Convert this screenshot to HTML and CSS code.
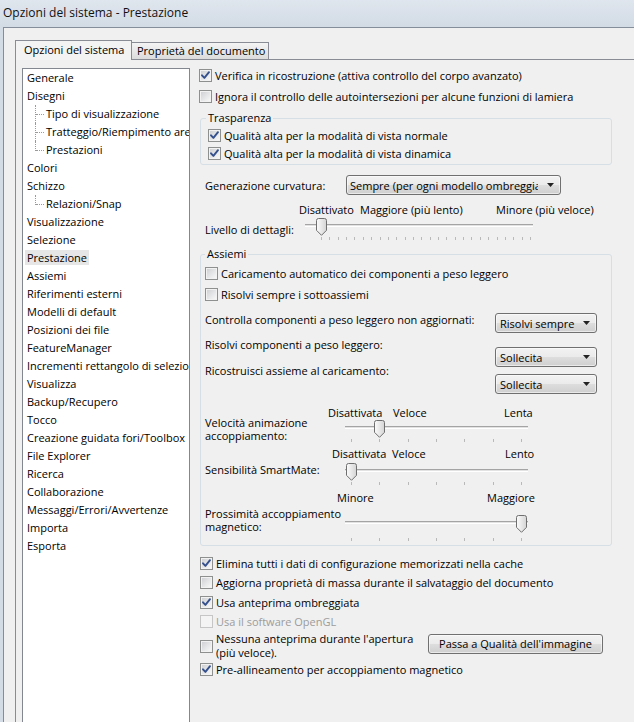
FILE: index.html
```html
<!DOCTYPE html>
<html lang="it">
<head>
<meta charset="utf-8">
<title>Opzioni del sistema - Prestazione</title>
<link rel="stylesheet" href="styles.css">
</head>
<body>
<div class="titlebar">Opzioni del sistema - Prestazione</div>
<div class="client">
  <div class="tabs">
    <div class="tab tab-active">Opzioni del sistema</div>
    <div class="tab tab-inactive">Proprietà del documento</div>
  </div>
  <div class="panel">
    <ul class="tree">
      <li>Generale</li>
      <li>Disegni</li>
      <li class="child">Tipo di visualizzazione</li>
      <li class="child">Tratteggio/Riempimento area</li>
      <li class="child last">Prestazioni</li>
      <li>Colori</li>
      <li>Schizzo</li>
      <li class="child last">Relazioni/Snap</li>
      <li>Visualizzazione</li>
      <li>Selezione</li>
      <li><span class="sel">Prestazione</span></li>
      <li>Assiemi</li>
      <li>Riferimenti esterni</li>
      <li>Modelli di default</li>
      <li>Posizioni dei file</li>
      <li>FeatureManager</li>
      <li>Incrementi rettangolo di selezione</li>
      <li>Visualizza</li>
      <li>Backup/Recupero</li>
      <li>Tocco</li>
      <li>Creazione guidata fori/Toolbox</li>
      <li>File Explorer</li>
      <li>Ricerca</li>
      <li>Collaborazione</li>
      <li>Messaggi/Errori/Avvertenze</li>
      <li>Importa</li>
      <li>Esporta</li>
    </ul>

    <div class="opts">
      <div class="cb-row top"><span class="cb"><svg viewBox="0 0 11 11"><path d="M2 5.3 L4.4 7.9 L9 2.2"/></svg></span>Verifica in ricostruzione (attiva controllo del corpo avanzato)</div>
      <div class="cb-row top"><span class="cb"></span>Ignora il controllo delle autointersezioni per alcune funzioni di lamiera</div>

      <div class="group group-trasp">
        <div class="legend">Trasparenza</div>
        <div class="cb-row sub"><span class="cb"><svg viewBox="0 0 11 11"><path d="M2 5.3 L4.4 7.9 L9 2.2"/></svg></span>Qualità alta per la modalità di vista normale</div>
        <div class="cb-row sub"><span class="cb"><svg viewBox="0 0 11 11"><path d="M2 5.3 L4.4 7.9 L9 2.2"/></svg></span>Qualità alta per la modalità di vista dinamica</div>
      </div>

      <div class="curv-row">
        <span class="curv-label">Generazione curvatura:</span>
        <div class="combo combo-wide"><span class="combo-text">Sempre (per ogni modello ombreggiato)</span><svg class="arrow" viewBox="0 0 7 4"><path d="M0 0 H7 L3.5 4 Z"/></svg></div>
      </div>

      <div class="scale scale-1"><span>Disattivato</span><span>Maggiore (più lento)</span><span>Minore (più veloce)</span></div>
      <div class="slider-row">
        <span class="slider-label label-1">Livello di dettagli:</span>
        <div class="slider slider-1">
          <div class="track"></div>
          <div class="ticks ticks-1"><i></i><i></i><i></i><i></i><i></i><i></i><i></i><i></i><i></i><i></i><i></i><i></i><i></i><i></i><i></i><i></i><i></i><i></i><i></i><i></i><i></i><i></i><i></i><i></i><i></i><i></i></div>
          <svg class="thumb" style="left:11px" viewBox="0 0 11 18"><defs><linearGradient id="thumbFill" x1="0" y1="0" x2="1" y2="0"><stop offset="0" stop-color="#fcfcfc"/><stop offset="1" stop-color="#d4d4d4"/></linearGradient></defs><path d="M0.5 2.5 Q0.5 0.5 2.5 0.5 H8.5 Q10.5 0.5 10.5 2.5 V12.3 L5.5 17.3 L0.5 12.3 Z"/></svg>
        </div>
      </div>

      <div class="group group-assiemi">
        <div class="legend">Assiemi</div>
        <div class="cb-row top first"><span class="cb"></span>Caricamento automatico dei componenti a peso leggero</div>
        <div class="cb-row top"><span class="cb"></span>Risolvi sempre i sottoassiemi</div>

        <div class="pairs">
          <div class="pair-labels">
            <span class="pl-a">Controlla componenti a peso leggero non aggiornati:</span>
            <span class="pl-b">Risolvi componenti a peso leggero:</span>
            <span class="pl-c">Ricostruisci assieme al caricamento:</span>
          </div>
          <div class="pair-combos">
            <div class="combo combo-small pc-a"><span class="combo-text">Risolvi sempre</span><svg class="arrow" viewBox="0 0 7 4"><path d="M0 0 H7 L3.5 4 Z"/></svg></div>
            <div class="combo combo-small pc-b"><span class="combo-text">Sollecita</span><svg class="arrow" viewBox="0 0 7 4"><path d="M0 0 H7 L3.5 4 Z"/></svg></div>
            <div class="combo combo-small pc-c"><span class="combo-text">Sollecita</span><svg class="arrow" viewBox="0 0 7 4"><path d="M0 0 H7 L3.5 4 Z"/></svg></div>
          </div>
        </div>

        <div class="scale scale-2"><span>Disattivata</span><span>Veloce</span><span>Lenta</span></div>
        <div class="slider-row">
          <span class="slider-label label-2">Velocità animazione<br>accoppiamento:</span>
          <div class="slider slider-7">
            <div class="track"></div>
            <div class="ticks ticks-7"><i></i><i></i><i></i><i></i><i></i><i></i><i></i></div>
            <svg class="thumb" style="left:29px" viewBox="0 0 11 18"><path d="M0.5 2.5 Q0.5 0.5 2.5 0.5 H8.5 Q10.5 0.5 10.5 2.5 V12.3 L5.5 17.3 L0.5 12.3 Z"/></svg>
          </div>
        </div>

        <div class="scale scale-3"><span>Disattivata</span><span>Veloce</span><span>Lento</span></div>
        <div class="slider-row row-3">
          <span class="slider-label label-3">Sensibilità SmartMate:</span>
          <div class="slider slider-7">
            <div class="track"></div>
            <div class="ticks ticks-7"><i></i><i></i><i></i><i></i><i></i><i></i><i></i></div>
            <svg class="thumb" style="left:1px" viewBox="0 0 11 18"><path d="M0.5 2.5 Q0.5 0.5 2.5 0.5 H8.5 Q10.5 0.5 10.5 2.5 V12.3 L5.5 17.3 L0.5 12.3 Z"/></svg>
          </div>
        </div>

        <div class="scale scale-4"><span>Minore</span><span>Maggiore</span></div>
        <div class="slider-row row-4">
          <span class="slider-label label-4">Prossimità accoppiamento<br>magnetico:</span>
          <div class="slider slider-7 slider-last">
            <div class="track"></div>
            <div class="ticks ticks-7"><i></i><i></i><i></i><i></i><i></i><i></i><i></i></div>
            <svg class="thumb" style="left:171px" viewBox="0 0 11 18"><path d="M0.5 2.5 Q0.5 0.5 2.5 0.5 H8.5 Q10.5 0.5 10.5 2.5 V12.3 L5.5 17.3 L0.5 12.3 Z"/></svg>
          </div>
        </div>
      </div>

      <div class="bottom">
        <div class="cb-row low"><span class="cb"><svg viewBox="0 0 11 11"><path d="M2 5.3 L4.4 7.9 L9 2.2"/></svg></span>Elimina tutti i dati di configurazione memorizzati nella cache</div>
        <div class="cb-row low"><span class="cb"></span>Aggiorna proprietà di massa durante il salvataggio del documento</div>
        <div class="cb-row low"><span class="cb"><svg viewBox="0 0 11 11"><path d="M2 5.3 L4.4 7.9 L9 2.2"/></svg></span>Usa anteprima ombreggiata</div>
        <div class="cb-row low disabled"><span class="cb"></span>Usa il software OpenGL</div>
        <div class="preview-row">
          <span class="cb"></span>
          <span class="preview-text">Nessuna anteprima durante l'apertura<br>(più veloce).</span>
          <div class="button">Passa a Qualità dell'immagine</div>
        </div>
        <div class="cb-row low"><span class="cb"><svg viewBox="0 0 11 11"><path d="M2 5.3 L4.4 7.9 L9 2.2"/></svg></span>Pre-allineamento per accoppiamento magnetico</div>
      </div>
    </div>
  </div>
</div>
</body>
</html>
```
FILE: styles.css
```css
* { box-sizing: border-box; }

html, body { margin: 0; padding: 0; }

body {
  width: 634px;
  height: 722px;
  overflow: hidden;
  background: linear-gradient(#dfe6ee, #d3dbe5 26px, #d3dbe5);
  font-family: "Open Sans", "Noto Sans", sans-serif;
  font-size: 11px;
  color: #000;
}

/* window caption */
.titlebar {
  height: 27px;
  line-height: 26px;
  padding-left: 3px;
  font-size: 12px;
  color: #111;
}

/* dialog client area */
.client {
  margin-left: 3px;
  height: 695px;
  background: #f0f0f0;
  border-left: 1px solid #848e9a;
  border-top: 1px solid #848e9a;
  padding: 12px 0 0 11px;
}

/* tab strip */
.tabs {
  display: flex;
  align-items: flex-end;
}

.tab {
  border: 1px solid #898c95;
  border-bottom: 0;
  white-space: nowrap;
}

.tab-active {
  position: relative;
  z-index: 1;
  width: 117px;
  height: 20px;
  margin-bottom: -1px;
  padding-left: 8px;
  line-height: 18px;
  background: #f3f3f3;
}

.tab-inactive {
  width: 138px;
  height: 17px;
  margin-left: -1px;
  padding-left: 5px;
  line-height: 16px;
  background: linear-gradient(#f4f4f4, #e8e8e8 50%, #dcdcdc);
}

.panel {
  display: flex;
  align-items: flex-start;
  height: 680px;
  padding: 8px 0 0 6px;
  border-top: 1px solid #898c95;
  border-left: 1px solid #898c95;
}

/* category tree */
.tree {
  flex: none;
  width: 168px;
  height: 672px;
  margin: 0;
  padding: 0;
  list-style: none;
  background: #fff;
  border: 1px solid #828790;
  overflow: hidden;
}

.tree li {
  position: relative;
  height: 18px;
  line-height: 18px;
  padding-left: 4px;
  white-space: nowrap;
}

.tree li.child { padding-left: 23px; }

.tree li.child::before {
  content: "";
  position: absolute;
  left: 12px;
  top: 0;
  height: 18px;
  border-left: 1px dotted #9a9a9a;
}

.tree li.child.last::before { height: 10px; }

.tree li.child::after {
  content: "";
  position: absolute;
  left: 13px;
  top: 9px;
  width: 8px;
  border-top: 1px dotted #9a9a9a;
}

.tree .sel {
  background: #e6e6e6;
  padding: 0 2px;
  margin-left: -2px;
}

/* option column */
.opts {
  flex: none;
  width: 430px;
  margin-left: 9px;
  margin-top: -3px;
}

.cb-row {
  display: flex;
  align-items: center;
  gap: 3px;
  white-space: nowrap;
}

.cb-row.top { height: 21px; }
.cb-row.sub { height: 18px; }
.cb-row.first { margin-top: 1px; }
.cb-row.low { height: 19.5px; margin-left: 1px; }
.cb-row.disabled { color: #9c9c9c; }

/* checkbox */
.cb {
  flex: none;
  width: 13px;
  height: 13px;
  border: 1px solid #8e8f8f;
  background: linear-gradient(135deg, #cbcdd0 0%, #e6e7e8 55%, #fbfbfb 100%);
  box-shadow: inset 0 0 0 1px #f2f2f2;
}

.cb svg {
  display: block;
  width: 11px;
  height: 11px;
}

.cb path {
  fill: none;
  stroke: #34508d;
  stroke-width: 1.9;
  stroke-linecap: round;
  stroke-linejoin: round;
}

.disabled .cb {
  border-color: #c6c6c6;
  background: #f4f4f4;
  box-shadow: none;
}

/* group boxes */
.group {
  width: 412px;
  margin-left: 1px;
  border: 1px solid #d5dfe5;
  border-radius: 3px;
}

.legend {
  display: table;
  line-height: 16px;
  margin-top: -9px;
  padding: 0 2px;
  background: #f0f0f0;
}

.group-trasp {
  margin-top: 11px;
  padding: 0 0 2px 7px;
}

.group-trasp .legend { margin-left: -2px; }

.group-assiemi {
  margin-top: 10px;
  padding: 0 0 2px 4px;
}

/* combo boxes and push button */
.combo,
.button {
  height: 20px;
  border: 1px solid #707070;
  border-radius: 3px;
  background: linear-gradient(#f2f2f2 0%, #ebebeb 48%, #dddddd 52%, #cfcfcf 100%);
  box-shadow: inset 0 0 0 1px rgba(255, 255, 255, 0.55);
}

.combo {
  display: flex;
  align-items: center;
  padding: 0 6px 0 4px;
}

.combo-text {
  flex: 1;
  min-width: 0;
  overflow: hidden;
  white-space: nowrap;
}

.arrow {
  flex: none;
  width: 7px;
  height: 4px;
  margin-left: 4px;
}

.arrow path { fill: #222; }

.combo-wide { width: 215px; padding-left: 3px; }
.combo-wide .arrow { margin-left: 9px; }
.combo-small { width: 102px; }

.curv-row {
  display: flex;
  align-items: center;
  height: 20px;
  margin-top: 10px;
}

.curv-label {
  width: 147px;
  padding-left: 6px;
}

/* labelled pairs inside Assiemi */
.pairs {
  display: flex;
  margin-top: 7px;
}

.pair-labels,
.pair-combos {
  display: flex;
  flex-direction: column;
}

.pair-labels {
  width: 290px;
  line-height: 16px;
  white-space: nowrap;
}

.pl-b { margin-top: 9px; }
.pl-c { margin-top: 10px; }

.pc-a { margin-top: 1px; }
.pc-b { margin-top: 14px; }
.pc-c { margin-top: 7px; }

/* trackbars */
.scale {
  display: grid;
  white-space: nowrap;
}

.scale-1 {
  margin-top: 7px;
  line-height: 16px;
  padding-left: 100px;
  grid-template-columns: 61px 136px auto;
}

.scale-2 {
  margin-top: 11px;
  line-height: 15px;
  padding-left: 123px;
  grid-template-columns: 65px 111px auto;
}

.scale-3 {
  line-height: 15px;
  padding-left: 127px;
  grid-template-columns: 60px 113px auto;
}

.scale-4 {
  margin-top: 1px;
  line-height: 15px;
  padding-left: 132px;
  grid-template-columns: 150px auto;
}

.slider-row {
  display: flex;
  align-items: flex-start;
}

.row-3 { margin-top: 2px; }
.row-4 { margin-top: 10px; }

.slider-label {
  flex: none;
  white-space: nowrap;
}

.label-1 {
  width: 106px;
  padding-left: 6px;
  margin-top: 4px;
  line-height: 16px;
}

.label-2 {
  width: 140px;
  margin-top: -4px;
  line-height: 13px;
}

.label-3 {
  width: 140px;
  margin-top: -1px;
  line-height: 16px;
}

.label-4 {
  width: 140px;
  margin-top: -8px;
  line-height: 13px;
}

.slider {
  position: relative;
  flex: none;
  height: 26px;
}

.slider-1 { width: 228px; }
.slider-7 { width: 183px; }
.slider-last { height: 28px; }

.track {
  margin-top: 6px;
  height: 3px;
  border-top: 1px solid #a4a4a4;
  border-bottom: 1px solid #ffffff;
  background: #e2e2e2;
}

.ticks {
  display: flex;
  justify-content: space-between;
  margin-top: 10px;
}

.ticks i {
  display: block;
  width: 1px;
  height: 3px;
  background: #b9b9b9;
}

.ticks-1 { padding: 0 2px 0 16px; }
.ticks-7 { padding: 0 6px; }
.slider-last .ticks { margin-top: 14px; }

.thumb {
  position: absolute;
  top: 0;
  width: 11px;
  height: 18px;
}

.thumb path {
  fill: url(#thumbFill);
  stroke: #6f6f6f;
  stroke-width: 1;
}

/* options under the Assiemi group */
.bottom { margin-top: 7.5px; }

.preview-row {
  display: flex;
  align-items: flex-start;
  height: 28px;
  margin-left: 1px;
}

.preview-row .cb { margin-top: 8.5px; }

.preview-text {
  width: 215px;
  padding-left: 3px;
  margin-top: 0.5px;
  line-height: 14px;
  white-space: nowrap;
}

.button {
  width: 175px;
  margin-top: 2.5px;
  line-height: 18px;
  text-align: center;
  white-space: nowrap;
}
```
